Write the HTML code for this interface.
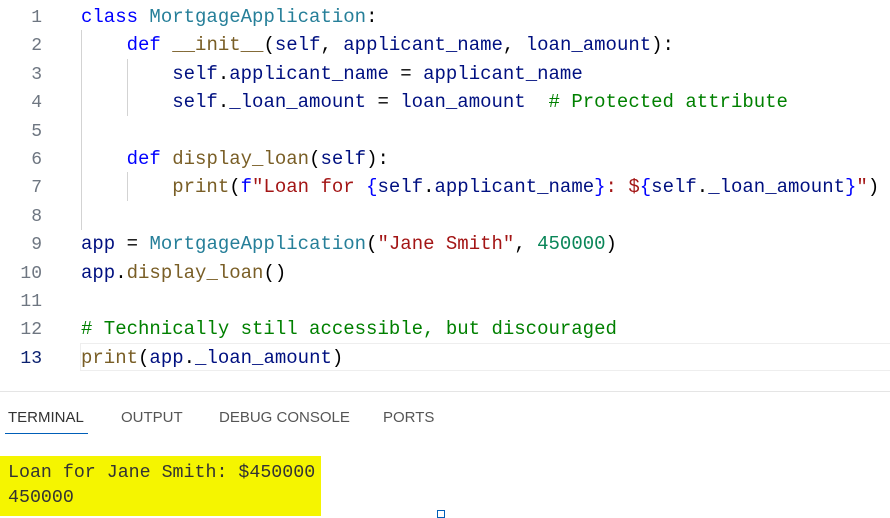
<!DOCTYPE html><html><head><style>
body{margin:0;width:890px;height:516px;background:#fff;overflow:hidden;position:relative;font-family:"Liberation Mono",monospace;font-size:19px}
.ln{position:absolute;left:0;width:42px;text-align:right;color:#6e7681;font-size:18px;margin-top:2px}
.c{position:absolute;left:81px;white-space:pre;color:#000}
.k{color:#0000ff}.t{color:#267f99}.f{color:#795e26}.s{color:#a31515}.n{color:#098658}.m{color:#008000}.v{color:#001080}
.g{position:absolute;width:1px;background:#d3d3d3}
.tab{position:absolute;top:409px;font-family:"Liberation Sans",sans-serif;font-size:15px;color:#555}
</style></head><body>
<div class="g" style="left:81px;top:30px;height:200px"></div>
<div class="g" style="left:127px;top:59px;height:57px"></div>
<div class="g" style="left:127px;top:172px;height:29px"></div>
<div style="position:absolute;left:80px;top:343px;width:810px;height:26px;border:1px solid #eee;border-right:none"></div>
<div style="position:absolute;left:0;top:2px">
<div class="ln" style="top:4px">1</div><div class="c" style="top:4px"><span class="k">class</span> <span class="t">MortgageApplication</span>:</div>
<div class="ln" style="top:32px">2</div><div class="c" style="top:32px">    <span class="k">def</span> <span class="f">__init__</span>(<span class="v">self</span>, <span class="v">applicant_name</span>, <span class="v">loan_amount</span>):</div>
<div class="ln" style="top:61px">3</div><div class="c" style="top:61px">        <span class="v">self</span>.<span class="v">applicant_name</span> = <span class="v">applicant_name</span></div>
<div class="ln" style="top:89px">4</div><div class="c" style="top:89px">        <span class="v">self</span>.<span class="v">_loan_amount</span> = <span class="v">loan_amount</span>  <span class="m"># Protected attribute</span></div>
<div class="ln" style="top:118px">5</div>
<div class="ln" style="top:146px">6</div><div class="c" style="top:146px">    <span class="k">def</span> <span class="f">display_loan</span>(<span class="v">self</span>):</div>
<div class="ln" style="top:174px">7</div><div class="c" style="top:174px">        <span class="f">print</span>(<span class="k">f</span><span class="s">"Loan for </span><span class="k">{</span><span class="v">self</span>.<span class="v">applicant_name</span><span class="k">}</span><span class="s">: $</span><span class="k">{</span><span class="v">self</span>.<span class="v">_loan_amount</span><span class="k">}</span><span class="s">"</span>)</div>
<div class="ln" style="top:203px">8</div>
<div class="ln" style="top:231px">9</div><div class="c" style="top:231px"><span class="v">app</span> = <span class="t">MortgageApplication</span>(<span class="s">"Jane Smith"</span>, <span class="n">450000</span>)</div>
<div class="ln" style="top:260px">10</div><div class="c" style="top:260px"><span class="v">app</span>.<span class="f">display_loan</span>()</div>
<div class="ln" style="top:288px">11</div>
<div class="ln" style="top:316px">12</div><div class="c" style="top:316px"><span class="m"># Technically still accessible, but discouraged</span></div>
<div class="ln" style="top:345px;color:#0b216f">13</div><div class="c" style="top:345px"><span class="f">print</span>(<span class="v">app</span>.<span class="v">_loan_amount</span>)</div>
</div>
<div style="position:absolute;left:0;top:391px;width:890px;height:1px;background:#e5e5e5"></div>
<div class="tab" style="left:8px;color:#333">TERMINAL</div>
<div style="position:absolute;left:5px;top:433px;width:83px;height:1px;background:#005fb8"></div>
<div class="tab" style="left:121px">OUTPUT</div>
<div class="tab" style="left:219px">DEBUG CONSOLE</div>
<div class="tab" style="left:383px">PORTS</div>
<div style="position:absolute;left:0;top:456px;width:321px;height:60px;background:#f5f500"></div>
<div class="c" style="left:8px;top:461px;color:#333;line-height:25px;font-size:18.3px">Loan for Jane Smith: $450000
450000</div>
<div style="position:absolute;left:437px;top:510px;width:8px;height:8px;border:1.5px solid #005fb8;box-sizing:border-box"></div>
</body></html>
